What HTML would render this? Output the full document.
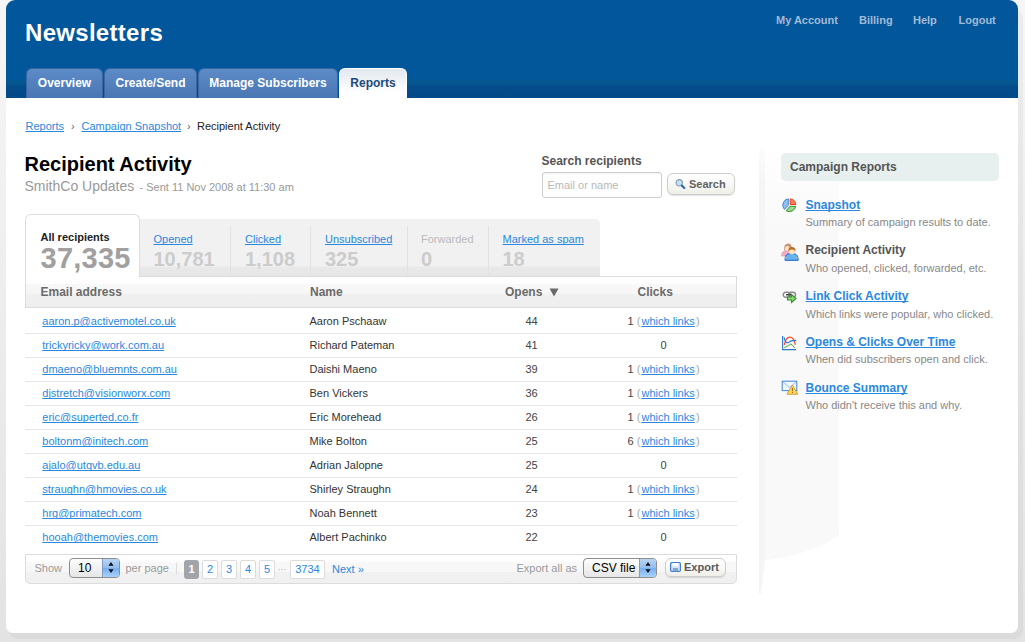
<!DOCTYPE html>
<html><head><meta charset="utf-8"><style>
*{margin:0;padding:0;box-sizing:border-box}
html,body{width:1025px;height:642px;overflow:hidden}
body{font-family:"Liberation Sans",sans-serif;background:linear-gradient(#f6f6f6,#e3e3e3);position:relative;color:#333}
.a{position:absolute}
.t{position:absolute;line-height:1;white-space:nowrap}
u{text-decoration:underline;text-underline-offset:1px;text-decoration-skip-ink:none}
</style></head><body>
<div class="a" style="left:9px;top:9px;width:1014px;height:630px;background:rgba(0,0,0,0.035);border-radius:9px"></div>
<div class="a" style="left:6px;top:0;width:1012px;height:633px;background:#fff;border-radius:9px 9px 7px 7px"></div>
<div class="a" style="left:6px;top:0;width:1012px;height:98px;border-radius:9px 9px 0 0;background:linear-gradient(#02569b 0,#02569a 80px,#05598f 80px,#04558f 85px,#034b8b 86px,#034a88 98px)"></div>
<div class="t" style="left:25px;top:20.7px;font-size:24px;font-weight:bold;color:#fff;letter-spacing:0.3px">Newsletters</div>
<div class="t" style="left:776px;top:15.2px;font-size:11px;font-weight:bold;color:#a3bad7;">My Account</div>
<div class="t" style="left:859px;top:15.2px;font-size:11px;font-weight:bold;color:#a3bad7;">Billing</div>
<div class="t" style="left:913px;top:15.2px;font-size:11px;font-weight:bold;color:#a3bad7;">Help</div>
<div class="t" style="left:958.5px;top:15.2px;font-size:11px;font-weight:bold;color:#a3bad7;">Logout</div>
<div class="a" style="left:26px;top:67.6px;width:77px;height:30.4px;border-radius:6px 6px 0 0;background:linear-gradient(#5d8bc7,#4a77b3);border:1px solid #3a67a3;border-bottom:0"></div>
<div class="t" style="left:26px;width:77px;text-align:center;top:76.8px;font-size:12px;font-weight:bold;color:#fff">Overview</div>
<div class="a" style="left:104px;top:67.6px;width:93px;height:30.4px;border-radius:6px 6px 0 0;background:linear-gradient(#5d8bc7,#4a77b3);border:1px solid #3a67a3;border-bottom:0"></div>
<div class="t" style="left:104px;width:93px;text-align:center;top:76.8px;font-size:12px;font-weight:bold;color:#fff">Create/Send</div>
<div class="a" style="left:198px;top:67.6px;width:140px;height:30.4px;border-radius:6px 6px 0 0;background:linear-gradient(#5d8bc7,#4a77b3);border:1px solid #3a67a3;border-bottom:0"></div>
<div class="t" style="left:198px;width:140px;text-align:center;top:76.8px;font-size:12px;font-weight:bold;color:#fff">Manage Subscribers</div>
<div class="a" style="left:339px;top:67.6px;width:68px;height:30.4px;border-radius:6px 6px 0 0;background:linear-gradient(#e1e8ef,#fff 80%);border:1px solid #fff;border-bottom:0"></div>
<div class="t" style="left:339px;width:68px;text-align:center;top:76.8px;font-size:12px;font-weight:bold;color:#1e4b7c">Reports</div>
<div class="t" style="left:25.5px;top:120.7px;font-size:11px;color:#2a88de;"><u>Reports</u></div>
<div class="t" style="left:71px;top:120.7px;font-size:11px;color:#666;">&rsaquo;</div>
<div class="t" style="left:81.5px;top:120.7px;font-size:11px;color:#2a88de;"><u>Campaign Snapshot</u></div>
<div class="t" style="left:187px;top:120.7px;font-size:11px;color:#666;">&rsaquo;</div>
<div class="t" style="left:197px;top:120.7px;font-size:11px;color:#222;">Recipient Activity</div>
<div class="t" style="left:24.5px;top:154.1px;font-size:20px;font-weight:bold;color:#000;">Recipient Activity</div>
<div class="t" style="left:24.5px;top:179.1px;font-size:14px;color:#999;">SmithCo Updates</div>
<div class="t" style="left:139.5px;top:181.7px;font-size:11px;color:#999;">- Sent 11 Nov 2008 at 11:30 am</div>
<div class="t" style="left:541.5px;top:154.6px;font-size:12px;font-weight:bold;color:#555;">Search recipients</div>
<div class="a" style="left:542px;top:172px;width:120px;height:26px;border:1px solid #cfcfcf;border-radius:3px;background:#fff;box-shadow:inset 0 1px 1px rgba(0,0,0,.05)"></div>
<div class="t" style="left:547.5px;top:179.7px;font-size:11px;color:#b8b8b8;">Email or name</div>
<div class="a" style="left:667px;top:173px;width:68px;height:22px;border:1px solid #cdcdcd;border-radius:6px;background:linear-gradient(#fff,#fafaf8 40%,#efeee8);box-shadow:0 1px 1px rgba(0,0,0,.12)"></div>
<svg class="a" style="left:674px;top:178px" width="13" height="13" viewBox="0 0 13 13"><circle cx="5.2" cy="4.8" r="3.2" fill="#bfe2fb" stroke="#8a9aa8" stroke-width="1.1"/><line x1="7.8" y1="7.5" x2="10.3" y2="10" stroke="#2a64a8" stroke-width="2" stroke-linecap="round"/></svg>
<div class="t" style="left:689px;top:178.7px;font-size:11px;font-weight:bold;color:#626262;">Search</div>
<div class="a" style="left:139px;top:219px;width:461px;height:58px;background:linear-gradient(#f1f1f1 0,#f1f1f1 47px,#e9e9e9 48px,#e6e6e6 57px);border-radius:0 5px 0 0"></div>
<div class="a" style="left:25px;top:214px;width:115px;height:70px;border:1px solid #dedede;border-bottom:0;border-radius:6px 6px 0 0;background:#fff"></div>
<div class="a" style="left:230px;top:226px;width:1px;height:51px;background:#e2e2e2"></div>
<div class="a" style="left:310px;top:226px;width:1px;height:51px;background:#e2e2e2"></div>
<div class="a" style="left:407px;top:226px;width:1px;height:51px;background:#e2e2e2"></div>
<div class="a" style="left:488px;top:226px;width:1px;height:51px;background:#e2e2e2"></div>
<div class="t" style="left:40.5px;top:231.7px;font-size:11px;font-weight:bold;color:#222;">All recipients</div>
<div class="t" style="left:40.5px;top:243.5px;font-size:29px;font-weight:bold;color:#a0a0a0;letter-spacing:0.25px">37,335</div>
<div class="t" style="left:153.5px;top:233.7px;font-size:11px;color:#2a88de;"><u>Opened</u></div>
<div class="t" style="left:153.5px;top:248.6px;font-size:20px;font-weight:bold;color:#cccccc;">10,781</div>
<div class="t" style="left:245px;top:233.7px;font-size:11px;color:#2a88de;"><u>Clicked</u></div>
<div class="t" style="left:245px;top:248.6px;font-size:20px;font-weight:bold;color:#cccccc;">1,108</div>
<div class="t" style="left:325px;top:233.7px;font-size:11px;color:#2a88de;"><u>Unsubscribed</u></div>
<div class="t" style="left:325px;top:248.6px;font-size:20px;font-weight:bold;color:#cccccc;">325</div>
<div class="t" style="left:421px;top:233.7px;font-size:11px;color:#bbb;">Forwarded</div>
<div class="t" style="left:421px;top:248.6px;font-size:20px;font-weight:bold;color:#cccccc;">0</div>
<div class="t" style="left:502.5px;top:233.7px;font-size:11px;color:#2a88de;"><u>Marked as spam</u></div>
<div class="t" style="left:502.5px;top:248.6px;font-size:20px;font-weight:bold;color:#cccccc;">18</div>
<div class="a" style="left:25px;top:276px;width:712px;height:32px;border:1px solid #dcdcdc;border-top:0;background:linear-gradient(#fff 0,#fdfdfd 8px,#f8f8f8 8px,#f6f6f6 18px,#f0f0f0 18px,#eeeeee 31px)"></div>
<div class="a" style="left:139px;top:276px;width:598px;height:1px;background:#dcdcdc"></div>
<div class="t" style="left:40.5px;top:285.8px;font-size:12px;font-weight:bold;color:#6a6a6a;">Email address</div>
<div class="t" style="left:310px;top:285.8px;font-size:12px;font-weight:bold;color:#6a6a6a;">Name</div>
<div class="t" style="left:505px;top:285.8px;font-size:12px;font-weight:bold;color:#6a6a6a;">Opens</div>
<svg class="a" style="left:549px;top:288px" width="10" height="9" viewBox="0 0 10 9"><path d="M0.5 0.5 H9.5 L5 8.5 Z" fill="#6a6a6a"/></svg>
<div class="t" style="left:637.5px;top:285.8px;font-size:12px;font-weight:bold;color:#6a6a6a;">Clicks</div>
<div class="t" style="left:42.3px;top:315.7px;font-size:11px;color:#2a88de;"><u>aaron.p@activemotel.co.uk</u></div>
<div class="t" style="left:309.5px;top:315.7px;font-size:11px;color:#333;">Aaron Pschaaw</div>
<div class="t" style="left:481.5px;width:100px;text-align:center;top:315.7px;font-size:11px;color:#444">44</div>
<div class="t" style="left:563.5px;width:200px;text-align:center;top:315.7px;font-size:11px;color:#444">1 <span style="color:#aaa">(</span><u style="color:#2a88de;margin:0 1.2px">which links</u><span style="color:#aaa">)</span></div>
<div class="a" style="left:25px;top:333px;width:712px;height:1px;background:#e6e6e6"></div>
<div class="t" style="left:42.3px;top:339.7px;font-size:11px;color:#2a88de;"><u>trickyricky@work.com.au</u></div>
<div class="t" style="left:309.5px;top:339.7px;font-size:11px;color:#333;">Richard Pateman</div>
<div class="t" style="left:481.5px;width:100px;text-align:center;top:339.7px;font-size:11px;color:#444">41</div>
<div class="t" style="left:563.5px;width:200px;text-align:center;top:339.7px;font-size:11px;color:#444">0</div>
<div class="a" style="left:25px;top:357px;width:712px;height:1px;background:#e6e6e6"></div>
<div class="t" style="left:42.3px;top:363.7px;font-size:11px;color:#2a88de;"><u>dmaeno@bluemnts.com.au</u></div>
<div class="t" style="left:309.5px;top:363.7px;font-size:11px;color:#333;">Daishi Maeno</div>
<div class="t" style="left:481.5px;width:100px;text-align:center;top:363.7px;font-size:11px;color:#444">39</div>
<div class="t" style="left:563.5px;width:200px;text-align:center;top:363.7px;font-size:11px;color:#444">1 <span style="color:#aaa">(</span><u style="color:#2a88de;margin:0 1.2px">which links</u><span style="color:#aaa">)</span></div>
<div class="a" style="left:25px;top:381px;width:712px;height:1px;background:#e6e6e6"></div>
<div class="t" style="left:42.3px;top:387.7px;font-size:11px;color:#2a88de;"><u>djstretch@visionworx.com</u></div>
<div class="t" style="left:309.5px;top:387.7px;font-size:11px;color:#333;">Ben Vickers</div>
<div class="t" style="left:481.5px;width:100px;text-align:center;top:387.7px;font-size:11px;color:#444">36</div>
<div class="t" style="left:563.5px;width:200px;text-align:center;top:387.7px;font-size:11px;color:#444">1 <span style="color:#aaa">(</span><u style="color:#2a88de;margin:0 1.2px">which links</u><span style="color:#aaa">)</span></div>
<div class="a" style="left:25px;top:405px;width:712px;height:1px;background:#e6e6e6"></div>
<div class="t" style="left:42.3px;top:411.7px;font-size:11px;color:#2a88de;"><u>eric@superted.co.fr</u></div>
<div class="t" style="left:309.5px;top:411.7px;font-size:11px;color:#333;">Eric Morehead</div>
<div class="t" style="left:481.5px;width:100px;text-align:center;top:411.7px;font-size:11px;color:#444">26</div>
<div class="t" style="left:563.5px;width:200px;text-align:center;top:411.7px;font-size:11px;color:#444">1 <span style="color:#aaa">(</span><u style="color:#2a88de;margin:0 1.2px">which links</u><span style="color:#aaa">)</span></div>
<div class="a" style="left:25px;top:429px;width:712px;height:1px;background:#e6e6e6"></div>
<div class="t" style="left:42.3px;top:435.7px;font-size:11px;color:#2a88de;"><u>boltonm@initech.com</u></div>
<div class="t" style="left:309.5px;top:435.7px;font-size:11px;color:#333;">Mike Bolton</div>
<div class="t" style="left:481.5px;width:100px;text-align:center;top:435.7px;font-size:11px;color:#444">25</div>
<div class="t" style="left:563.5px;width:200px;text-align:center;top:435.7px;font-size:11px;color:#444">6 <span style="color:#aaa">(</span><u style="color:#2a88de;margin:0 1.2px">which links</u><span style="color:#aaa">)</span></div>
<div class="a" style="left:25px;top:453px;width:712px;height:1px;background:#e6e6e6"></div>
<div class="t" style="left:42.3px;top:459.7px;font-size:11px;color:#2a88de;"><u>ajalo@utqvb.edu.au</u></div>
<div class="t" style="left:309.5px;top:459.7px;font-size:11px;color:#333;">Adrian Jalopne</div>
<div class="t" style="left:481.5px;width:100px;text-align:center;top:459.7px;font-size:11px;color:#444">25</div>
<div class="t" style="left:563.5px;width:200px;text-align:center;top:459.7px;font-size:11px;color:#444">0</div>
<div class="a" style="left:25px;top:477px;width:712px;height:1px;background:#e6e6e6"></div>
<div class="t" style="left:42.3px;top:483.7px;font-size:11px;color:#2a88de;"><u>straughn@hmovies.co.uk</u></div>
<div class="t" style="left:309.5px;top:483.7px;font-size:11px;color:#333;">Shirley Straughn</div>
<div class="t" style="left:481.5px;width:100px;text-align:center;top:483.7px;font-size:11px;color:#444">24</div>
<div class="t" style="left:563.5px;width:200px;text-align:center;top:483.7px;font-size:11px;color:#444">1 <span style="color:#aaa">(</span><u style="color:#2a88de;margin:0 1.2px">which links</u><span style="color:#aaa">)</span></div>
<div class="a" style="left:25px;top:501px;width:712px;height:1px;background:#e6e6e6"></div>
<div class="t" style="left:42.3px;top:507.7px;font-size:11px;color:#2a88de;"><u>hrg@primatech.com</u></div>
<div class="t" style="left:309.5px;top:507.7px;font-size:11px;color:#333;">Noah Bennett</div>
<div class="t" style="left:481.5px;width:100px;text-align:center;top:507.7px;font-size:11px;color:#444">23</div>
<div class="t" style="left:563.5px;width:200px;text-align:center;top:507.7px;font-size:11px;color:#444">1 <span style="color:#aaa">(</span><u style="color:#2a88de;margin:0 1.2px">which links</u><span style="color:#aaa">)</span></div>
<div class="a" style="left:25px;top:525px;width:712px;height:1px;background:#e6e6e6"></div>
<div class="t" style="left:42.3px;top:531.7px;font-size:11px;color:#2a88de;"><u>hooah@themovies.com</u></div>
<div class="t" style="left:309.5px;top:531.7px;font-size:11px;color:#333;">Albert Pachinko</div>
<div class="t" style="left:481.5px;width:100px;text-align:center;top:531.7px;font-size:11px;color:#444">22</div>
<div class="t" style="left:563.5px;width:200px;text-align:center;top:531.7px;font-size:11px;color:#444">0</div>
<div class="a" style="left:25px;top:554px;width:712px;height:30px;border:1px solid #dcdcdc;border-radius:0 0 5px 5px;background:linear-gradient(#fff 0,#fdfdfd 7px,#f8f8f8 7px,#f7f7f7 17px,#f1f1f1 17px,#f0f0f0 29px)"></div>
<div class="t" style="left:34.5px;top:563.0px;font-size:11px;color:#999;">Show</div>
<div class="a" style="left:69px;top:558px;width:51px;height:20px;border:1px solid #8e8e8e;border-radius:4px;background:linear-gradient(#fdfdfd,#e6e6e6);overflow:hidden"><div class="a" style="left:32px;top:0;width:18px;height:18px;background:linear-gradient(#b9d4f3,#93bdf0 50%,#76aef0 51%,#a9d2fb);border-left:1px solid #7d9cc6"></div></div>
<svg class="a" style="left:108px;top:561px" width="6" height="14" viewBox="0 0 6 14"><path d="M3 1 L5.6 4.8 H0.4 Z M3 12 L5.6 8.2 H0.4 Z" fill="#111"/></svg>
<div class="t" style="left:78px;top:561.6px;font-size:12px;color:#000;">10</div>
<div class="t" style="left:125.5px;top:563.0px;font-size:11px;color:#999;">per page</div>
<div class="a" style="left:176px;top:563px;width:1px;height:12px;background:#dddddd"></div>
<div class="a" style="left:184px;top:560px;width:15px;height:19px;border-radius:3px;background:#a1a5a9"></div>
<div class="t" style="left:184px;width:15px;text-align:center;top:563.7px;font-size:11px;font-weight:bold;color:#fff">1</div>
<div class="a" style="left:202px;top:560px;width:16px;height:19px;border:1px solid #dcdcdc;border-radius:2px;background:#fff"></div>
<div class="t" style="left:202px;width:16px;text-align:center;top:563.7px;font-size:11px;color:#2a88de">2</div>
<div class="a" style="left:221px;top:560px;width:16px;height:19px;border:1px solid #dcdcdc;border-radius:2px;background:#fff"></div>
<div class="t" style="left:221px;width:16px;text-align:center;top:563.7px;font-size:11px;color:#2a88de">3</div>
<div class="a" style="left:240px;top:560px;width:16px;height:19px;border:1px solid #dcdcdc;border-radius:2px;background:#fff"></div>
<div class="t" style="left:240px;width:16px;text-align:center;top:563.7px;font-size:11px;color:#2a88de">4</div>
<div class="a" style="left:259px;top:560px;width:16px;height:19px;border:1px solid #dcdcdc;border-radius:2px;background:#fff"></div>
<div class="t" style="left:259px;width:16px;text-align:center;top:563.7px;font-size:11px;color:#2a88de">5</div>
<div class="a" style="left:290px;top:560px;width:35px;height:19px;border:1px solid #dcdcdc;border-radius:2px;background:#fff"></div>
<div class="t" style="left:290px;width:35px;text-align:center;top:563.7px;font-size:11px;color:#2a88de">3734</div>
<div class="t" style="left:277.5px;top:564.5px;font-size:10px;color:#bbb;letter-spacing:-0.5px">&middot;&middot;&middot;</div>
<div class="t" style="left:332px;top:563.7px;font-size:11px;color:#2a88de;">Next &raquo;</div>
<div class="t" style="left:516.5px;top:563.0px;font-size:11px;color:#999;">Export all as</div>
<div class="a" style="left:583px;top:558px;width:74px;height:20px;border:1px solid #8e8e8e;border-radius:4px;background:linear-gradient(#fdfdfd,#e6e6e6);overflow:hidden"><div class="a" style="left:55px;top:0;width:18px;height:18px;background:linear-gradient(#b9d4f3,#93bdf0 50%,#76aef0 51%,#a9d2fb);border-left:1px solid #7d9cc6"></div></div>
<svg class="a" style="left:645px;top:561px" width="6" height="14" viewBox="0 0 6 14"><path d="M3 1 L5.6 4.8 H0.4 Z M3 12 L5.6 8.2 H0.4 Z" fill="#111"/></svg>
<div class="t" style="left:592px;top:561.8px;font-size:12px;color:#000;">CSV file</div>
<div class="a" style="left:665px;top:558px;width:61px;height:19px;border:1px solid #cdcdcd;border-radius:6px;background:linear-gradient(#fff,#fafaf8 40%,#efeee8);box-shadow:0 1px 1px rgba(0,0,0,.12)"></div>
<svg class="a" style="left:670px;top:562px" width="11" height="10" viewBox="0 0 11 10"><rect x="0.6" y="0.6" width="9.8" height="8.8" rx="1.2" fill="#d9e8f8" stroke="#3d7fd0" stroke-width="1.2"/><rect x="2.5" y="1" width="6" height="3" fill="#fff"/><rect x="2.8" y="6" width="5.4" height="3.2" fill="#8aa6c6"/></svg>
<div class="t" style="left:684px;top:562.2px;font-size:11px;font-weight:bold;color:#5a5a5a;">Export</div>
<svg class="a" style="left:0;top:0" width="1025" height="642"><defs><linearGradient id="sg" x1="0" y1="0" x2="0" y2="1"><stop offset="0" stop-color="#f9f9f9" stop-opacity="0"/><stop offset="0.2" stop-color="#f9f9f9"/><stop offset="1" stop-color="#f9f9f9"/></linearGradient><linearGradient id="sg2" x1="0" y1="0" x2="0" y2="1"><stop offset="0" stop-color="#f4f4f4" stop-opacity="0.2"/><stop offset="0.08" stop-color="#f5f5f5"/><stop offset="1" stop-color="#f5f5f5"/></linearGradient></defs><path d="M765 147 H839 V535 Q815 553 768 560 L765 560 Z" fill="url(#sg)"/><path d="M759 147 H765 V560 L761 594 H759 Z" fill="url(#sg2)"/></svg>
<div class="a" style="left:781px;top:153px;width:218px;height:28px;border-radius:5px;background:#e8efef"></div>
<div class="t" style="left:790px;top:161.1px;font-size:12px;font-weight:bold;color:#555;">Campaign Reports</div>
<div class="t" style="left:805.5px;top:198.8px;font-size:12px;font-weight:bold;color:#2a88de;"><u>Snapshot</u></div>
<div class="t" style="left:805.5px;top:216.7px;font-size:11px;color:#888;">Summary of campaign results to date.</div>
<div class="t" style="left:805.5px;top:243.8px;font-size:12px;font-weight:bold;color:#555;">Recipient Activity</div>
<div class="t" style="left:805.5px;top:263.2px;font-size:11px;color:#888;">Who opened, clicked, forwarded, etc.</div>
<div class="t" style="left:805.5px;top:289.8px;font-size:12px;font-weight:bold;color:#2a88de;"><u>Link Click Activity</u></div>
<div class="t" style="left:805.5px;top:309.2px;font-size:11px;color:#888;">Which links were popular, who clicked.</div>
<div class="t" style="left:805.5px;top:335.8px;font-size:12px;font-weight:bold;color:#2a88de;"><u>Opens &amp; Clicks Over Time</u></div>
<div class="t" style="left:805.5px;top:354.2px;font-size:11px;color:#888;">When did subscribers open and click.</div>
<div class="t" style="left:805.5px;top:382.1px;font-size:12px;font-weight:bold;color:#2a88de;"><u>Bounce Summary</u></div>
<div class="t" style="left:805.5px;top:400.2px;font-size:11px;color:#888;">Who didn't receive this and why.</div>
<svg class="a" style="left:781px;top:197px" width="16" height="16" viewBox="0 0 16 16"><path d="M9.2 1.9 A6.2 6.2 0 0 1 14.8 7.5 H9.2 Z" fill="#fb7c5c" stroke="#ee3d10" stroke-width="1"/><path d="M14.8 9.3 A6.6 6.6 0 0 1 5.2 13.8 L8.9 9.3 Z" fill="#9fd596" stroke="#2f9a22" stroke-width="1"/><path d="M7.3 1.8 V8.2 L3.5 12.4 A6.3 6.3 0 0 1 7.3 1.8 Z" fill="#8fc1f0" stroke="#4a86c8" stroke-width="1"/></svg>
<svg class="a" style="left:780px;top:243px" width="19" height="18" viewBox="0 0 19 18"><path d="M1.5 13 Q1.5 8.5 5 7.8 L8.5 8 L9 13 Z" fill="#f2a9c8" stroke="#e98fb4" stroke-width="0.6"/><path d="M0.8 11 Q0.8 9.5 2.2 9.5 Q3 10.5 2.5 12.5 Z" fill="#f3c9a0"/><path d="M4.2 7 Q3.6 0.6 8 0.5 Q12 0.6 11.6 5.5 L10 8 Q9.5 4 8 3.5 Q5.5 3.5 5.2 8 Z" fill="#c99278"/><ellipse cx="7.3" cy="5.3" rx="2.2" ry="2.4" fill="#fbe2c4"/><path d="M5 17.3 Q5 11.5 8.5 10.8 H14.5 Q18 11.5 18.2 17.3 Z" fill="#63b5f3" stroke="#1c62c6" stroke-width="1"/><path d="M5.2 13.5 Q4.6 15.5 5.8 16.6 L6.6 14 Z M17.8 13.5 Q18.4 15.5 17.2 16.6 L16.4 14 Z" fill="#e8a443"/><ellipse cx="11.9" cy="8.6" rx="3.2" ry="2.8" fill="#fbe0bd"/><path d="M8.3 8.6 Q8 4 11.8 4 Q15.6 4 15.5 8.2 Q14 6.2 11.6 6.6 Q9.5 6.6 8.3 8.6 Z" fill="#c26b1e"/></svg>
<svg class="a" style="left:782px;top:289px" width="16" height="16" viewBox="0 0 16 16"><rect x="1.2" y="3.2" width="7" height="5" rx="2.5" fill="none" stroke="#8a8a8a" stroke-width="1.4"/><rect x="6.5" y="3.2" width="7" height="5" rx="2.5" fill="none" stroke="#8a8a8a" stroke-width="1.4"/><rect x="4" y="5" width="6" height="1.4" fill="#444"/><path d="M5.5 8 H9.5 V5.5 L14 9.5 L9.5 13.5 V11 H5.5Z" fill="#8fd27f" stroke="#2e9a22" stroke-width="1.1"/></svg>
<svg class="a" style="left:776px;top:330px" width="28" height="28" viewBox="0 0 28 28"><path d="M6.6 6 V19.6 H20" fill="none" stroke="#2f73c8" stroke-width="1.1"/><path d="M8.2 15 Q10 7 14 7.2 Q18.2 7.6 19.3 14.8" fill="none" stroke="#f24a22" stroke-width="1.2"/><path d="M8 7.4 Q9.5 13.6 12.2 12.6 Q15 10.2 20.2 10.4" fill="none" stroke="#2e76d6" stroke-width="1.2"/><path d="M8.3 17.6 Q12 16.4 14.8 14 Q16.6 14.6 18.6 17.9" fill="none" stroke="#45a53b" stroke-width="1"/></svg>
<svg class="a" style="left:780.5px;top:380px" width="18" height="16" viewBox="0 0 18 16"><rect x="1.2" y="1.2" width="14.6" height="9.4" fill="#eef5fd" stroke="#4f8ed6" stroke-width="1.1"/><path d="M2 2 L8.5 7.6 L15 2" fill="none" stroke="#9cc3ea" stroke-width="1"/><path d="M11.4 5 L16.8 14.2 H6 Z" fill="#f7dd5a" stroke="#d69a3a" stroke-width="1"/><rect x="10.9" y="8" width="1.1" height="3.2" fill="#a76a1c"/><rect x="10.9" y="12" width="1.1" height="1" fill="#a76a1c"/></svg>
</body></html>
